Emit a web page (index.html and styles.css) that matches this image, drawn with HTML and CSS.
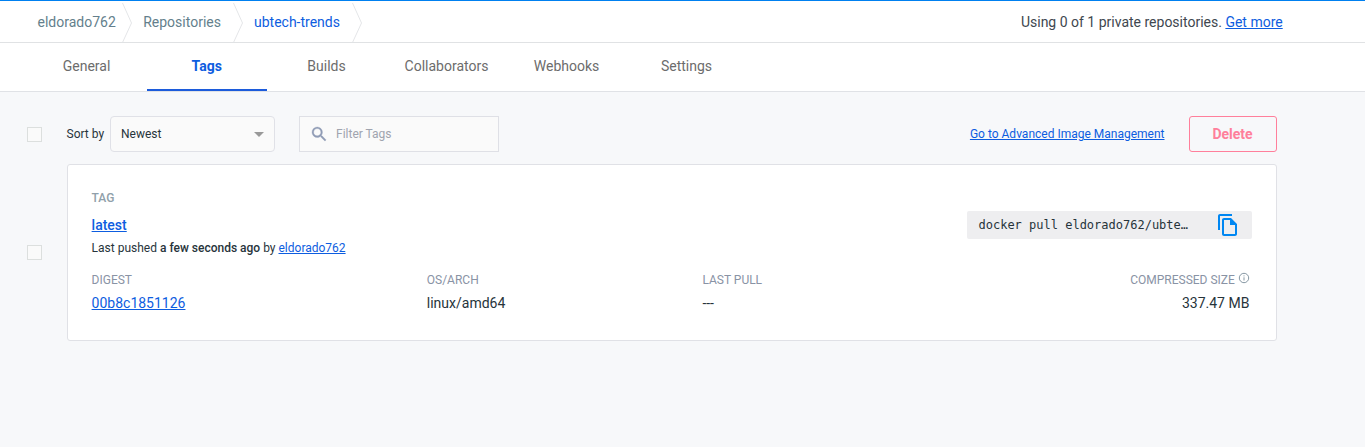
FILE: index.html
```html
<!DOCTYPE html>
<html lang="en">
<head>
<meta charset="utf-8">
<title>ubtech-trends tags</title>
<link rel="stylesheet" href="styles.css">
</head>
<body>
<header class="topbar">
  <nav class="crumbs">
    <a class="crumb crumb-user">eldorado762</a>
    <svg class="sep" viewBox="0 0 11 41"><path d="M.5 2 L9.5 22 L.5 41.5"/></svg>
    <a class="crumb crumb-repos">Repositories</a>
    <svg class="sep" viewBox="0 0 11 41"><path d="M.5 2 L9.5 22 L.5 41.5"/></svg>
    <a class="crumb crumb-current">ubtech-trends</a>
    <svg class="sep" viewBox="0 0 11 41"><path d="M.5 2 L9.5 22 L.5 41.5"/></svg>
  </nav>
  <div class="usage">Using 0 of 1 private repositories. <a class="link">Get more</a></div>
</header>
<nav class="tabs">
  <a class="tab">General</a>
  <a class="tab active">Tags</a>
  <a class="tab">Builds</a>
  <a class="tab">Collaborators</a>
  <a class="tab">Webhooks</a>
  <a class="tab">Settings</a>
</nav>
<main class="content">
  <div class="toolbar">
    <span class="checkbox"></span>
    <span class="sort-label">Sort by</span>
    <div class="select"><span>Newest</span><svg class="caret" viewBox="0 0 10 5"><path d="M0 0h10L5 5z"/></svg></div>
    <div class="filter">
      <svg class="search" viewBox="0 0 18 18"><path d="M12.5 11h-.79l-.28-.27A6.47 6.47 0 0 0 13 6.5 6.5 6.5 0 1 0 6.5 13c1.61 0 3.09-.59 4.23-1.57l.27.28v.79l5 4.99L17.49 16l-4.99-5zm-6 0C4.01 11 2 8.99 2 6.5S4.01 2 6.5 2 11 4.01 11 6.5 8.99 11 6.5 11z"/></svg>
      <span>Filter Tags</span>
    </div>
    <a class="link advanced">Go to Advanced Image Management</a>
    <button class="delete">Delete</button>
  </div>
  <div class="row">
    <span class="checkbox"></span>
    <section class="card">
      <div class="card-head">
        <div>
          <div class="label tag-label">TAG</div>
          <div class="tag-name"><a class="link">latest</a></div>
          <div class="pushed">Last pushed <b>a few seconds ago</b> by <a class="link">eldorado762</a></div>
        </div>
        <div class="pull">
          <code>docker pull eldorado762/ubte…</code>
          <svg class="copy" viewBox="0 0 24 24"><path d="M16 1H4c-1.1 0-2 .9-2 2v14h2V3h12V1zm-1 4H8c-1.1 0-1.99.9-1.99 2L6 21c0 1.1.89 2 1.99 2H19c1.1 0 2-.9 2-2V11l-6-6zM8 21V7h6v5h5v9H8z"/></svg>
        </div>
      </div>
      <div class="details">
        <div><div class="label">DIGEST</div><div class="value"><a class="link">00b8c1851126</a></div></div>
        <div><div class="label">OS/ARCH</div><div class="value">linux/amd64</div></div>
        <div><div class="label">LAST PULL</div><div class="value">---</div></div>
        <div class="size">
          <div class="label">COMPRESSED SIZE<svg class="info" viewBox="0 0 12 12"><circle cx="6" cy="6" r="4.7"/><path d="M6 5.3v3.2M6 3.4v1"/></svg></div>
          <div class="value">337.47 MB</div>
        </div>
      </div>
    </section>
  </div>
</main>
</body>
</html>
```

FILE: styles.css
```css
* { box-sizing: border-box; }
body {
  margin: 0;
  height: 447px;
  overflow: hidden;
  background: #f7f8fa;
  color: #27343b;
  font: 14px/20px Roboto, sans-serif;
}
.link { color: #0d5de0; text-decoration: underline; }
.topbar {
  display: flex;
  justify-content: space-between;
  height: 43px;
  padding-right: 82.3px;
  background: #fff;
  border-top: 1px solid #0080f0;
  border-bottom: 1px solid #e0e2e4;
}
.crumbs { display: flex; height: 42px; }
.crumb { line-height: 42px; color: #647f8c; white-space: nowrap; }
.crumb-user { width: 122px; padding-left: 37.5px; }
.crumb-repos { width: 100px; padding-left: 10.2px; }
.crumb-current { width: 108px; padding-left: 10px; color: #0d5de0; }
.sep { width: 11px; height: 41px; fill: none; stroke: #e4e6e8; stroke-width: 1; }
.usage { line-height: 42px; color: #40474f; }
.tabs {
  display: flex;
  height: 49px;
  padding-left: 27px;
  background: #fff;
  border-bottom: 1px solid #e0e2e6;
}
.tab { width: 120px; height: 48px; padding-right: 1px; line-height: 46px; text-align: center; color: #6c6c6c; }
.tab.active { padding-right: 0.5px; color: #0d5de0; font-weight: 700; border-bottom: 2px solid #1c5bdb; }
.content { width: 1277px; padding: 24px 0 0 27px; }
.toolbar { display: flex; align-items: center; height: 36px; font-size: 12px; }
.checkbox { flex: none; width: 15px; height: 15px; background: #fafafa; border: 1px solid #dcdfde; }
.sort-label { width: 43.5px; margin-left: 24.5px; }
.select {
  display: flex;
  align-items: center;
  justify-content: space-between;
  width: 165px;
  height: 36px;
  padding: 0 10px;
  background: #fafafa;
  border: 1px solid #e0e1e7;
  border-radius: 4px;
}
.caret { width: 10px; height: 5px; fill: #999; }
.filter {
  display: flex;
  align-items: center;
  gap: 9.5px;
  width: 200px;
  height: 36px;
  margin-left: 24px;
  padding-left: 12px;
  background: #fafafa;
  border: 1px solid #dfe0e6;
  color: #a0a4af;
}
.search { width: 14.5px; height: 14.5px; fill: #8f9bb5; stroke: #8f9bb5; stroke-width: 0.4; overflow: visible; }
.advanced { margin-left: auto; }
.delete {
  width: 88px;
  height: 36px;
  margin-left: 24.5px;
  padding: 0 1px 0 0;
  background: transparent;
  border: 1px solid #ff7f9b;
  border-radius: 3px;
  color: #ff7f9b;
  font: 700 14px/20px Roboto, sans-serif;
}
.row { display: flex; align-items: center; margin-top: 12px; }
.card {
  width: 1210px;
  height: 177px;
  margin-left: 25px;
  padding: 24px 24px 24px 23.6px;
  background: #fff;
  border: 1px solid #e0e1e6;
  border-radius: 3px;
}
.card-head { display: flex; justify-content: space-between; height: 81px; }
.label { height: 20px; font-size: 12px; line-height: 20px; color: #8993a5; }
.tag-label { height: 18px; line-height: 18px; font-weight: 500; color: #90a0aa; }
.tag-name { margin-top: 8px; line-height: 20px; font-weight: 500; }
.pushed { margin-top: 3px; font-size: 12px; line-height: 20px; }
.pushed b { font-weight: 500; }
.pull {
  display: flex;
  align-items: center;
  justify-content: space-between;
  width: 285px;
  height: 28px;
  margin-top: 22px;
  padding: 0 12px 0 11.5px;
  background: #eeeef0;
  border-radius: 2px;
}
.pull code { font: 12px/20px "DejaVu Sans Mono", monospace; }
.copy { width: 24px; height: 24px; fill: #0087f2; }
.details { display: grid; grid-template-columns: 335.2px 275.6px 276px 271px; }
.value { margin-top: 3px; line-height: 20px; }
.size { text-align: right; }
.info { width: 12px; height: 12px; margin: 0 -0.5px 0 3px; vertical-align: 0; fill: none; stroke: #8697a3; }
```
